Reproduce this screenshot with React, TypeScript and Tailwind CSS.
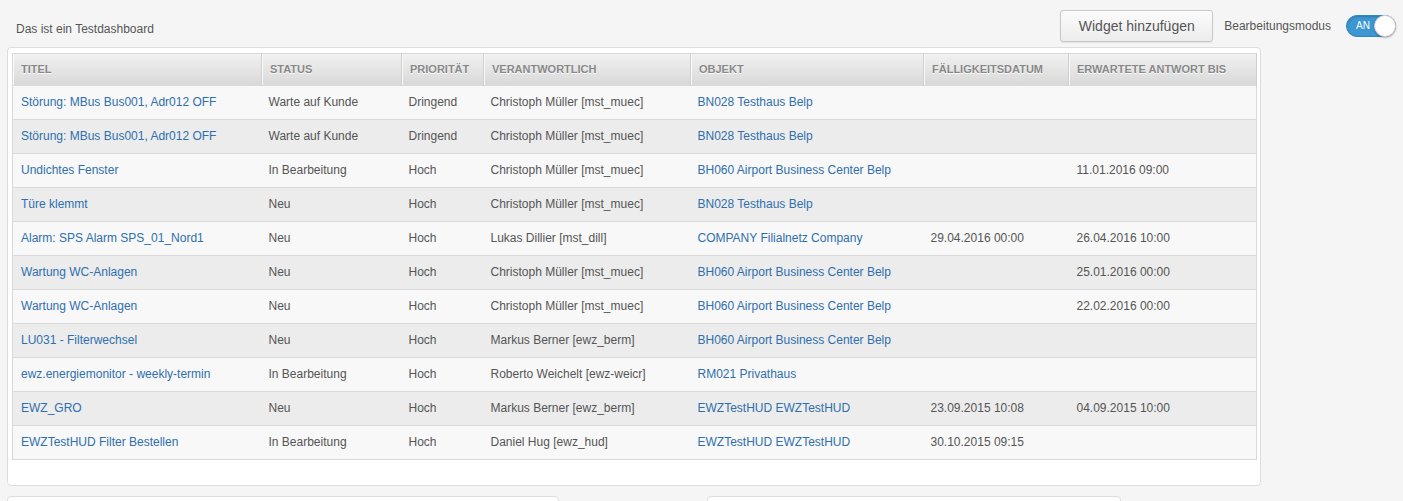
import React from 'react';

type Row = {
  titel: string;
  status: string;
  prio: string;
  verantwortlich: string;
  objekt: string;
  faellig?: string;
  antwort?: string;
};

const rows: Row[] = [
  { titel: 'Störung: MBus Bus001, Adr012 OFF', status: 'Warte auf Kunde', prio: 'Dringend', verantwortlich: 'Christoph Müller [mst_muec]', objekt: 'BN028 Testhaus Belp' },
  { titel: 'Störung: MBus Bus001, Adr012 OFF', status: 'Warte auf Kunde', prio: 'Dringend', verantwortlich: 'Christoph Müller [mst_muec]', objekt: 'BN028 Testhaus Belp' },
  { titel: 'Undichtes Fenster', status: 'In Bearbeitung', prio: 'Hoch', verantwortlich: 'Christoph Müller [mst_muec]', objekt: 'BH060 Airport Business Center Belp', antwort: '11.01.2016 09:00' },
  { titel: 'Türe klemmt', status: 'Neu', prio: 'Hoch', verantwortlich: 'Christoph Müller [mst_muec]', objekt: 'BN028 Testhaus Belp' },
  { titel: 'Alarm: SPS Alarm SPS_01_Nord1', status: 'Neu', prio: 'Hoch', verantwortlich: 'Lukas Dillier [mst_dill]', objekt: 'COMPANY Filialnetz Company', faellig: '29.04.2016 00:00', antwort: '26.04.2016 10:00' },
  { titel: 'Wartung WC-Anlagen', status: 'Neu', prio: 'Hoch', verantwortlich: 'Christoph Müller [mst_muec]', objekt: 'BH060 Airport Business Center Belp', antwort: '25.01.2016 00:00' },
  { titel: 'Wartung WC-Anlagen', status: 'Neu', prio: 'Hoch', verantwortlich: 'Christoph Müller [mst_muec]', objekt: 'BH060 Airport Business Center Belp', antwort: '22.02.2016 00:00' },
  { titel: 'LU031 - Filterwechsel', status: 'Neu', prio: 'Hoch', verantwortlich: 'Markus Berner [ewz_berm]', objekt: 'BH060 Airport Business Center Belp' },
  { titel: 'ewz.energiemonitor - weekly-termin', status: 'In Bearbeitung', prio: 'Hoch', verantwortlich: 'Roberto Weichelt [ewz-weicr]', objekt: 'RM021 Privathaus' },
  { titel: 'EWZ_GRO', status: 'Neu', prio: 'Hoch', verantwortlich: 'Markus Berner [ewz_berm]', objekt: 'EWZTestHUD EWZTestHUD', faellig: '23.09.2015 10:08', antwort: '04.09.2015 10:00' },
  { titel: 'EWZTestHUD Filter Bestellen', status: 'In Bearbeitung', prio: 'Hoch', verantwortlich: 'Daniel Hug [ewz_hud]', objekt: 'EWZTestHUD EWZTestHUD', faellig: '30.10.2015 09:15' },
];

const columns = [
  { label: 'Titel', width: 'w-[249px]' },
  { label: 'Status', width: 'w-[140px]' },
  { label: 'Priorität', width: 'w-[82px]' },
  { label: 'Verantwortlich', width: 'w-[207px]' },
  { label: 'Objekt', width: 'w-[233px]' },
  { label: 'Fälligkeitsdatum', width: 'w-[145px]' },
  { label: 'Erwartete Antwort bis', width: 'w-[188px]' },
];

function Toggle() {
  return (
    <div className="relative h-[22px] w-[50px] rounded-full bg-[#3c97d3] border border-[#2f86c0] shadow-[inset_0_1px_2px_rgba(0,0,0,0.2)]">
      <span className="absolute left-[9px] top-[4px] text-[10px] leading-[12px] text-white">AN</span>
      <span className="absolute right-[-1px] top-[-1px] h-[22px] w-[22px] rounded-full bg-white border border-[#cfcfcf] shadow-[0_1px_2px_rgba(0,0,0,0.25)]" />
    </div>
  );
}

export default function App() {
  return (
    <div className="min-h-screen bg-[#f5f5f5] text-[12px] text-[#555] font-['Liberation_Sans',Arial,sans-serif] overflow-hidden">
      <div className="flex h-[47px] items-start">
        <div className="ml-[16px] mt-[22px] leading-[14px]">Das ist ein Testdashboard</div>
        <div className="ml-auto mr-[7px] mt-[10px] flex items-center">
          <button className="h-[32px] w-[153px] rounded-[3px] border border-[#c8c8c8] bg-gradient-to-b from-[#fbfbfb] to-[#ececec] text-[14px] text-[#555] shadow-[0_1px_1px_rgba(0,0,0,0.08)]">
            Widget hinzufügen
          </button>
          <span className="ml-[11px] text-[12px]">Bearbeitungsmodus</span>
          <div className="ml-[15px]">
            <Toggle />
          </div>
        </div>
      </div>

      <div className="ml-[7px] w-[1254px] rounded-[4px] border border-[#dddddd] bg-white px-[4px] pt-[5px] pb-[25px]">
        <table className="w-[1244px] table-fixed border-collapse border border-[#d9d9d9]">
          <thead>
            <tr className="h-[32px] bg-gradient-to-b from-[#f1f1f1] to-[#d8d8d8]">
              {columns.map((c) => (
                <th
                  key={c.label}
                  className={`${c.width} border-r border-[#cfcfcf] shadow-[inset_1px_0_0_#fafafa] px-[8px] text-left text-[11px] font-bold uppercase text-[#888888] [text-shadow:0_1px_0_#fff]`}
                >
                  {c.label}
                </th>
              ))}
            </tr>
          </thead>
          <tbody>
            {rows.map((r, i) => (
              <tr key={i} className={`h-[34px] border-t border-[#dadada] ${i % 2 === 0 ? 'bg-[#f8f8f8]' : 'bg-[#ececec]'}`}>
                <td className="px-[8px] pb-[1px] text-[#2f6fae]">{r.titel}</td>
                <td className="px-[7px] pb-[1px]">{r.status}</td>
                <td className="px-[7px] pb-[1px]">{r.prio}</td>
                <td className="px-[7px] pb-[1px]">{r.verantwortlich}</td>
                <td className="px-[7px] pb-[1px] text-[#2f6fae]">{r.objekt}</td>
                <td className="px-[7px] pb-[1px]">{r.faellig ?? ''}</td>
                <td className="px-[8px] pb-[1px]">{r.antwort ?? ''}</td>
              </tr>
            ))}
          </tbody>
        </table>
      </div>

      <div className="mt-[10px] flex">
        <div className="ml-[7px] h-[120px] w-[552px] rounded-[4px] border border-[#dddddd] bg-white" />
        <div className="ml-[148px] h-[120px] w-[414px] rounded-[4px] border border-[#dddddd] bg-white" />
      </div>
    </div>
  );
}
